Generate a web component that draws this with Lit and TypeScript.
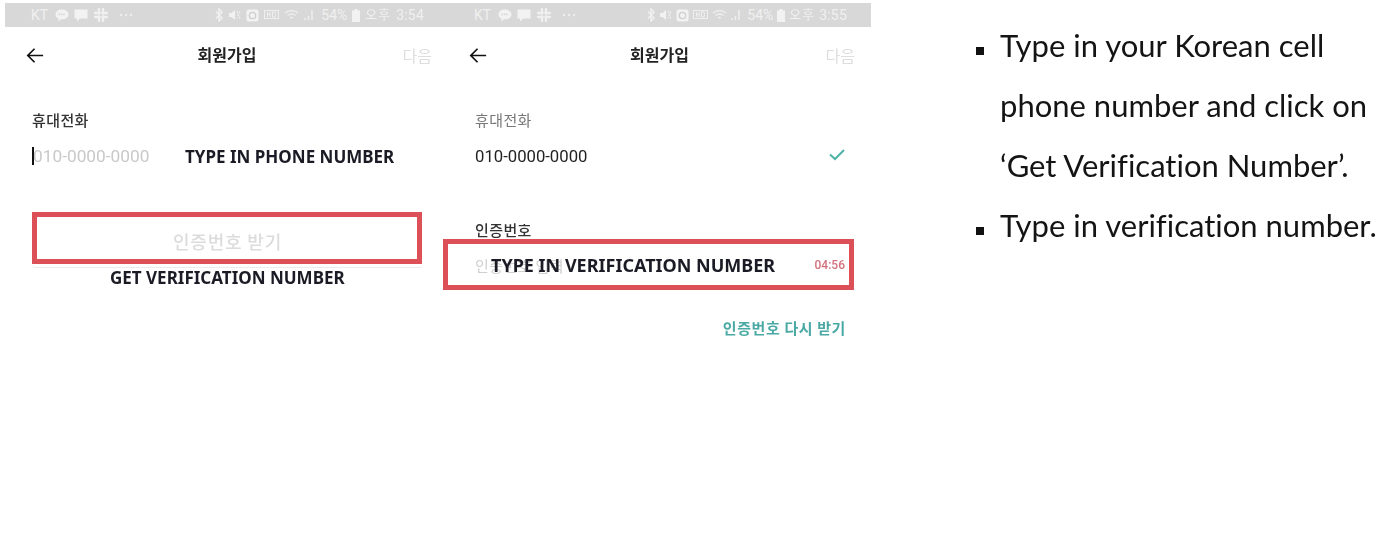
import { LitElement, html, css } from "lit";
import { customElement } from "lit/decorators.js";

const arrow = html`<svg class="arrow" width="18" height="17" viewBox="0 0 20 18"><path d="M19 9H2M9.5 1.5 2 9l7.5 7.5" fill="none" stroke="#111" stroke-width="1.900"/></svg>`;

const statusLeft = html`
  <span class="kt">KT</span>
  <svg width="14" height="13" viewBox="0 0 14 13"><path d="M7 0.5C3.2 0.5 0.5 2.6 0.5 5.4c0 1.8 1.2 3.3 3 4.2L3.2 12.5l3-2.3h.8c3.8 0 6.5-2.1 6.5-4.8S10.800 .5 7 .5z" fill="#f2f2f2"/><path d="M3.500 5.400h7" stroke="#d8d8d8" stroke-width="1.600" stroke-dasharray="1.500 .8"/></svg>
  <svg width="14" height="13" viewBox="0 0 14 13"><path d="M.5 .5h13v9H6l-3 3v-3H.5z" fill="#f2f2f2"/></svg>
  <svg class="slack" width="14" height="14" viewBox="0 0 14 14"><path d="M5 1v4.500M9 8.500V13M1 9h4.500M8.500 5H13" stroke="#f0f0f0" stroke-width="2.400" stroke-linecap="round"/><path d="M9 1v4.500M5 8.500V13M1 5h4.500M8.500 9H13" stroke="#f0f0f0" stroke-width="2.400" stroke-linecap="round"/></svg>
  <svg class="dots" width="14" height="4" viewBox="0 0 14 4"><circle cx="2" cy="2" r="1.200" fill="#eee"/><circle cx="7" cy="2" r="1.200" fill="#eee"/><circle cx="12" cy="2" r="1.200" fill="#eee"/></svg>`;

const statusRight = (time: string) => html`
  <svg width="8" height="14" viewBox="0 0 8 14"><path d="M1 3.500 7 10 4 13V1l3 3-6 6.500" fill="none" stroke="#f0f0f0" stroke-width="1.500"/></svg>
  <svg width="13" height="12" viewBox="0 0 13 12"><path d="M1 4h2.500L7 1v10L3.500 8H1z" fill="#f2f2f2"/><path d="M9 2l3 8M12 2.500 9 9" stroke="#eee" stroke-width="1.200" stroke-dasharray="2 1"/></svg>
  <svg width="13" height="13" viewBox="0 0 13 13"><rect x=".5" y=".5" width="12" height="12" rx="2.500" fill="#f2f2f2"/><circle cx="6.500" cy="6.500" r="3.200" fill="none" stroke="#cfcfcf" stroke-width="1.300"/></svg>
  <svg width="15" height="11" viewBox="0 0 15 11"><rect x=".5" y=".5" width="14" height="8" fill="none" stroke="#efefef"/><path d="M3.500 2v5M6 2v5M3.500 4.500H6M8.500 2v5h2.500q1.500-2.500 0-5z" fill="none" stroke="#efefef"/></svg>
  <svg width="15" height="12" viewBox="0 0 15 12"><path d="M1 4q6.500-5 13 0M3.500 6.500q4-3 8 0M6 9q1.500-1 3 0" fill="none" stroke="#eee" stroke-width="1.300"/></svg>
  <svg width="9" height="12" viewBox="0 0 9 12"><path d="M1 9v2M4.500 7v4M8 1v10" stroke="#f0f0f0" stroke-width="1.400"/></svg>
  <span class="pct">54%</span>
  <svg width="8" height="13" viewBox="0 0 8 13"><path d="M2.500 0h3v1.500H8V13H0V1.500h2.500z" fill="#f2f2f2"/></svg>
  <span class="ampm">오후</span>
  <span class="time">${time}</span>`;

@customElement("app-root")
export class AppRoot extends LitElement {
  static styles = css`
    :host { display: block; width: 1400px; height: 540px; background: #fff; overflow: hidden; font-family: "Noto Sans CJK KR", "Noto Sans", sans-serif; }
    .page { display: flex; height: 540px; padding-top: 3px; box-sizing: border-box; padding-left: 5px; }
    .phone { position: relative; flex: none; display: flex; flex-direction: column; filter: blur(0.4px); }
    .p1 { width: 435px; }
    .p2 { width: 431px; }

    .status { height: 24px; background: #d8d8d8; display: flex; align-items: center; justify-content: space-between; color: #f0f0f0; font: 14px/24px "Roboto", "Noto Sans CJK KR", sans-serif; }
    .p1 .status { padding: 0 16px 0 26px; }
    .p2 .status { padding: 0 24px 0 34px; }
    .sl, .sr { display: flex; align-items: center; }
    .sl { gap: 5px; }
    .sl .kt { margin-right: 2px; }
    .sl .slack { margin-left: 1px; }
    .sl .dots { margin-left: 6px; }
    .p1 .sr { gap: 5px; }
    .p2 .sr { gap: 4px; }
    .pct { margin-left: 3px; font-size: 14px; }
    .ampm { font-size: 13px; letter-spacing: 1px; }
    .time { font-size: 14px; letter-spacing: .2px; }

    .head { display: grid; grid-template-columns: 1fr auto 1fr; align-items: center; height: 56px; }
    .p1 .head { padding: 0 8px 0 17px; }
    .p2 .head { padding: 0 16px 0 24px; }
    .title { font-size: 16px; font-weight: 700; color: #222; line-height: 20px; margin-bottom: 2px; }
    .next { justify-self: end; font-size: 16px; color: #dedede; line-height: 20px; margin-bottom: 1px; }
    .arrow { display: block; margin-left: 4px; }
    .p2 .arrow { margin-left: 5px; }

    .body { display: flex; flex-direction: column; }
    .p1 .body { padding: 0 17px 0 27px; }
    .p2 .body { padding: 0 26px 0 35px; }
    .label { font-size: 15px; line-height: 20px; margin-top: 27px; color: #333; font-weight: 500; letter-spacing: .4px; }
    .label.grey { color: #777; font-weight: 400; }
    .value { margin-top: 16px; display: flex; align-items: center; height: 22px; font: 16.700px/22px "Roboto", sans-serif; color: #222; justify-content: space-between; }
    .value svg { margin-top: -4px; }
    .p1 .value { font-size: 17.300px; margin-top: 15px; }
    .placeholder { color: #c9c9c9; }
    .caret { width: 2px; height: 18px; background: #111; margin-right: -1px; flex: none; }
    .left { display: flex; align-items: center; }

    .btn { margin-top: 47px; height: 50px; display: flex; align-items: center; justify-content: center; color: #dcdcdc; font-size: 18px; font-weight: 500; letter-spacing: .8px; border-bottom: 1px solid #ececec; border-radius: 0 0 4px 4px; padding-top: 2px; padding-bottom: 1px; }
    .label2 { margin-top: 52px; }
    .code { height: 50px; display: flex; align-items: center; justify-content: space-between; }
    .code .ph { color: #cfcfcf; font-size: 15px; letter-spacing: .4px; }
    .timer { font: 500 12px "Roboto", sans-serif; color: #d3707d; }
    .resend { align-self: flex-end; margin-top: 28px; font-size: 15px; font-weight: 700; color: #4aa9a4; line-height: 20px; letter-spacing: .6px; margin-right: -1px; }

    .box { position: absolute; box-sizing: border-box; border: 5px solid #dc5057; }
    .p1 .box { left: 27px; top: 209px; width: 390px; height: 52px; }
    .p2 .box { left: 3px; top: 236px; width: 411px; height: 51px; }
    .tag { position: absolute; font: 700 17px/22px "Noto Sans", sans-serif; color: #1b1b25; white-space: nowrap; }
    .t1 { left: 180px; top: 143px; }
    .t2 { left: 105px; top: 264px; }
    .t3 { left: 51px; top: 251px; font-size: 18px; }

    .notes { margin: 0; padding: 12px 0 0 0; margin-left: 105px; list-style: none; font: 31px/60px "Lato", sans-serif; font-variant-ligatures: none; color: #141414; flex: none; width: 420px; }
    .notes li { position: relative; padding-left: 24px; white-space: pre; filter: blur(0.3px); }
    .notes li::before { content: ""; position: absolute; left: 0; top: 32px; width: 8px; height: 8px; background: #111; }
  `;

  private status(time: string) {
    return html`<div class="status"><div class="sl">${statusLeft}</div><div class="sr">${statusRight(time)}</div></div>`;
  }

  render() {
    return html`<div class="page">
      <section class="phone p1">
        ${this.status("3:54")}
        <div class="head">${arrow}<div class="title">회원가입</div><div class="next">다음</div></div>
        <div class="body">
          <div class="label">휴대전화</div>
          <div class="value"><div class="left"><span class="caret"></span><span class="placeholder">010-0000-0000</span></div></div>
          <div class="btn">인증번호 받기</div>
        </div>
        <div class="box"></div>
        <div class="tag t1">TYPE IN PHONE NUMBER</div>
        <div class="tag t2">GET VERIFICATION NUMBER</div>
      </section>
      <section class="phone p2">
        ${this.status("3:55")}
        <div class="head">${arrow}<div class="title">회원가입</div><div class="next">다음</div></div>
        <div class="body">
          <div class="label grey">휴대전화</div>
          <div class="value"><span>010-0000-0000</span>
            <svg width="16" height="12" viewBox="0 0 16 12"><path d="M1 5.500 6 10l9-9" fill="none" stroke="#4fb3a8" stroke-width="2"/></svg>
          </div>
          <div class="label label2">인증번호</div>
          <div class="code"><span class="ph">인증번호 입력</span><span class="timer">04:56</span></div>
          <div class="resend">인증번호 다시 받기</div>
        </div>
        <div class="box"></div>
        <div class="tag t3">TYPE IN VERIFICATION NUMBER</div>
      </section>
      <ul class="notes">
        <li>Type in your Korean cell
phone number and click on
‘Get Verification Number’.</li>
        <li>Type in verification number.</li>
      </ul>
    </div>`;
  }
}
